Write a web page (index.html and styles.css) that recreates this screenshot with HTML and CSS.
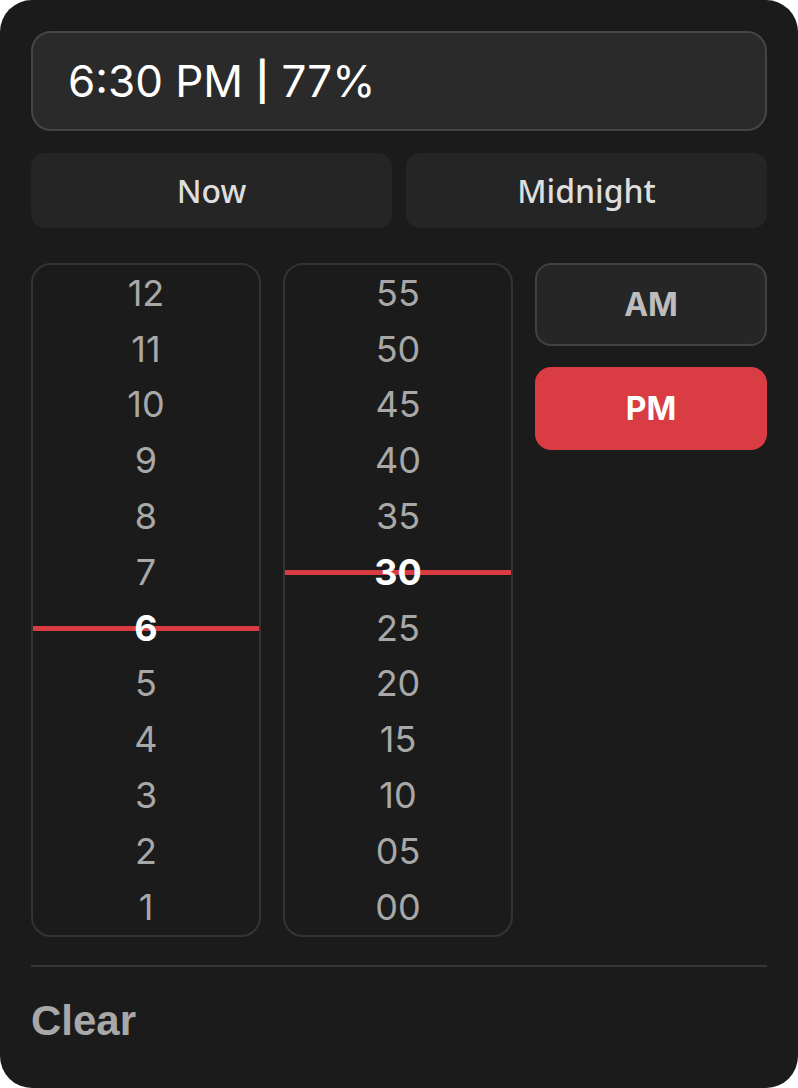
FILE: index.html
```html
<!DOCTYPE html>
<html lang="en">
<head>
    <meta charset="UTF-8">
    <meta name="viewport" content="width=device-width, initial-scale=1.0">
    <title>Time Picker</title>
    <link rel="stylesheet" href="styles.css">
</head>
<body>
    <div class="picker">
        <div class="display">6:30 PM <span class="sep">|</span> 77%</div>

        <div class="quick">
            <div class="quick-btn">Now</div>
            <div class="quick-btn">Midnight</div>
        </div>

        <div class="wheels">
            <div class="wheel">
                <div class="wheel-item"><span>12</span></div>
                <div class="wheel-item"><span>11</span></div>
                <div class="wheel-item"><span>10</span></div>
                <div class="wheel-item"><span>9</span></div>
                <div class="wheel-item"><span>8</span></div>
                <div class="wheel-item"><span>7</span></div>
                <div class="wheel-item selected"><span>6</span></div>
                <div class="wheel-item"><span>5</span></div>
                <div class="wheel-item"><span>4</span></div>
                <div class="wheel-item"><span>3</span></div>
                <div class="wheel-item"><span>2</span></div>
                <div class="wheel-item"><span>1</span></div>
            </div>
            <div class="wheel">
                <div class="wheel-item"><span>55</span></div>
                <div class="wheel-item"><span>50</span></div>
                <div class="wheel-item"><span>45</span></div>
                <div class="wheel-item"><span>40</span></div>
                <div class="wheel-item"><span>35</span></div>
                <div class="wheel-item selected"><span>30</span></div>
                <div class="wheel-item"><span>25</span></div>
                <div class="wheel-item"><span>20</span></div>
                <div class="wheel-item"><span>15</span></div>
                <div class="wheel-item"><span>10</span></div>
                <div class="wheel-item"><span>05</span></div>
                <div class="wheel-item"><span>00</span></div>
            </div>
            <div class="meridiem">
                <div class="meridiem-btn">AM</div>
                <div class="meridiem-btn active">PM</div>
            </div>
        </div>

        <div class="divider"></div>
        <div class="clear">Clear</div>
    </div>
</body>
</html>
```

FILE: styles.css
```css
body {
    margin: 0;
    padding: 0;
    background-color: #ffffff;
    font-family: Inter, 'Noto Sans', sans-serif;
}

.picker {
    width: 798px;
    height: 1088px;
    box-sizing: border-box;
    padding: 31px 31px 0;
    background-color: #1b1b1b;
    border-radius: 32px;
}

.display {
    height: 100px;
    box-sizing: border-box;
    display: flex;
    align-items: center;
    white-space: pre;
    padding-left: 35px;
    background-color: #2a2a2a;
    border: 2px solid #454545;
    border-radius: 20px;
    color: #ffffff;
    font-size: 44px;
}

.display .sep {
    font-size: 38px;
    font-weight: 600;
}

.quick {
    display: grid;
    grid-template-columns: 1fr 1fr;
    gap: 14px;
    margin-top: 22px;
}

.quick-btn {
    height: 75px;
    display: flex;
    align-items: center;
    justify-content: center;
    background-color: #252525;
    border-radius: 14px;
    color: #dedede;
    font-family: 'Noto Sans', sans-serif;
    font-size: 32px;
    font-weight: 500;
}

.wheels {
    display: grid;
    grid-template-columns: 230px 230px 1fr;
    column-gap: 22px;
    align-items: start;
    margin-top: 35px;
}

.wheel {
    border: 2px solid #333333;
    border-radius: 20px;
    overflow: hidden;
}

.wheel-item {
    position: relative;
    height: 55.8px;
    display: flex;
    align-items: center;
    justify-content: center;
    color: #a8a8a8;
    font-size: 36px;
}

.wheel-item span {
    position: relative;
    z-index: 1;
}

.wheel-item.selected {
    color: #ffffff;
    font-weight: 700;
}

/* red marker across the selected row */
.wheel-item.selected::before {
    content: '';
    position: absolute;
    left: 0;
    right: 0;
    top: 50%;
    height: 5px;
    margin-top: -2px;
    background-color: #d93c42;
}

.meridiem {
    display: flex;
    flex-direction: column;
    gap: 21px;
}

.meridiem-btn {
    height: 83px;
    box-sizing: border-box;
    display: flex;
    align-items: center;
    justify-content: center;
    background-color: #262626;
    border: 2px solid #424242;
    border-radius: 16px;
    color: #bdbdbd;
    font-size: 32px;
    font-weight: 700;
}

.meridiem-btn.active {
    background-color: #d93c42;
    border-color: #d93c42;
    color: #ffffff;
}

.divider {
    height: 2px;
    margin-top: 28px;
    background-color: #363636;
}

.clear {
    margin-top: 33px;
    color: #a8a8a8;
    font-family: 'Liberation Sans', Arial, sans-serif;
    font-size: 42px;
    font-weight: 700;
    line-height: 1;
}
```
